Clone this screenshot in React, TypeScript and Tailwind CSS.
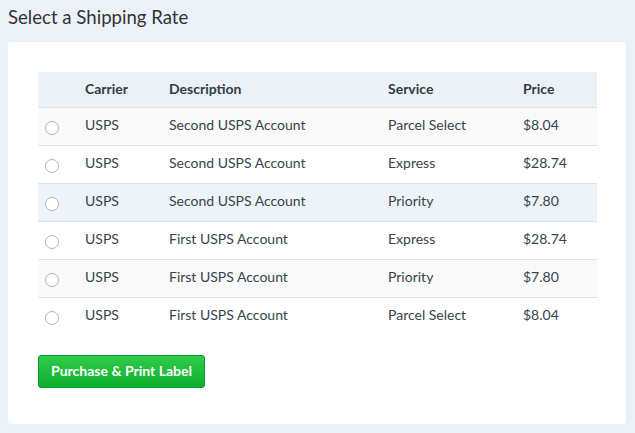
import React from "react";

const rows = [
  { c: "USPS", d: "Second USPS Account", s: "Parcel Select", p: "$8.04", bg: "bg-[#f9f9f9]" },
  { c: "USPS", d: "Second USPS Account", s: "Express", p: "$28.74", bg: "bg-white" },
  { c: "USPS", d: "Second USPS Account", s: "Priority", p: "$7.80", bg: "bg-[#eef3fa]" },
  { c: "USPS", d: "First USPS Account", s: "Express", p: "$28.74", bg: "bg-white" },
  { c: "USPS", d: "First USPS Account", s: "Priority", p: "$7.80", bg: "bg-[#f9f9f9]" },
  { c: "USPS", d: "First USPS Account", s: "Parcel Select", p: "$8.04", bg: "bg-white" },
];

export default function App() {
  return (
    <div
      className="w-[635px] h-[433px] bg-[#edf2f9] text-[#36444c] overflow-hidden"
      style={{ fontFamily: "Lato, sans-serif" }}
    >
      <h1 className="pl-[8px] pt-[4px] h-[42px] text-[18.6px] leading-[26px] text-[#333]">
        Select a Shipping Rate
      </h1>
      <div className="ml-[8px] w-[618px] h-[382px] bg-white rounded-[3px] shadow-[0_0_2px_rgba(0,0,0,0.06)] pt-[30px] pl-[30px]">
        <table className="w-[559px] border-collapse text-[14px]">
          <thead>
            <tr className="bg-[#ecf1f8] h-[35px] border-b border-[#dde2e8]">
              <th className="w-[47px]"></th>
              <th className="w-[84px] pb-[2px] text-left font-bold text-[#2f3d45]">Carrier</th>
              <th className="w-[219px] pb-[2px] text-left font-bold text-[#2f3d45]">Description</th>
              <th className="w-[135px] pb-[2px] text-left font-bold text-[#2f3d45]">Service</th>
              <th className="pb-[2px] text-left font-bold text-[#2f3d45]">Price</th>
            </tr>
          </thead>
          <tbody>
            {rows.map((r, i) => (
              <tr
                key={i}
                className={`${r.bg} h-[38px] ${i < rows.length - 1 ? "border-b border-[#dde2e8]" : ""}`}
              >
                <td className="pl-[7px] pt-[4px]">
                  <span className="block w-[14px] h-[14px] rounded-full border border-[#b5b5b5] bg-white" />
                </td>
                <td className="align-middle pb-[4px]">{r.c}</td>
                <td className="align-middle pb-[4px]">{r.d}</td>
                <td className="align-middle pb-[4px]">{r.s}</td>
                <td className="align-middle pb-[4px]">{r.p}</td>
              </tr>
            ))}
          </tbody>
        </table>
        <button className="mt-[20px] w-[167px] h-[33px] pb-[2px] rounded-[3px] border border-[#0d9a2a] bg-gradient-to-b from-[#2fcb4a] to-[#07b02c] text-white font-bold text-[14px]">
          Purchase &amp; Print Label
        </button>
      </div>
    </div>
  );
}
